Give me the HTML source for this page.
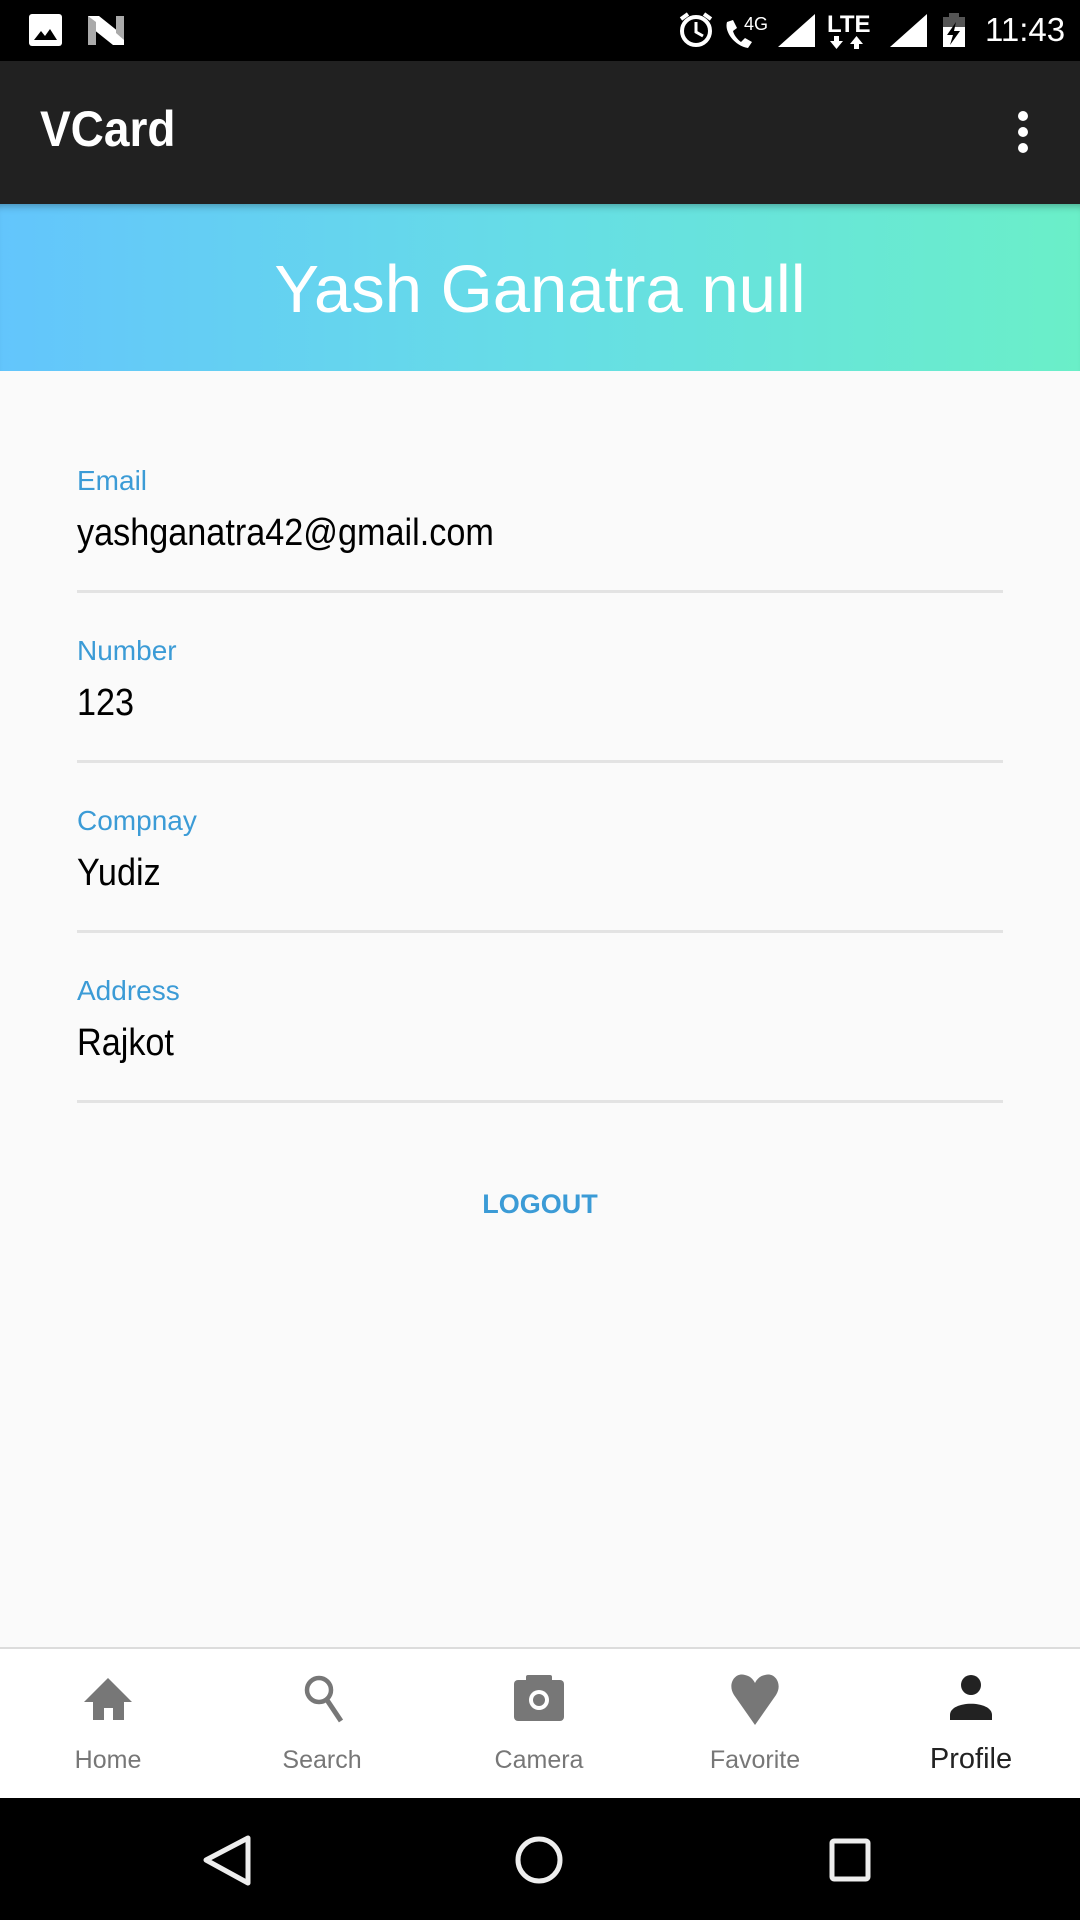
<!DOCTYPE html>
<html><head><meta charset="utf-8"><style>
*{margin:0;padding:0;box-sizing:border-box}
body{width:1080px;height:1920px;background:#fafafa;font-family:"Liberation Sans",sans-serif;position:relative;overflow:hidden}
.abs{position:absolute}
.sb{left:0;top:0;width:1080px;height:61px;background:#000}
.ab{left:0;top:61px;width:1080px;height:143px;background:#212121}
.hd{left:0;top:204px;width:1080px;height:167px;background:linear-gradient(90deg,#63c5fc,#66dde6 50%,#6aefc8);box-shadow:inset 0 8px 8px -6px rgba(0,0,0,.3)}
.lbl{left:77px;color:#3b9bd6;font-size:28px;line-height:1}
.val{left:77px;color:#000;font-size:38px;line-height:1;transform:scaleX(.9);transform-origin:left;white-space:nowrap}
.div{left:77px;width:926px;height:3px;background:#e3e3e3}
.nav{left:0;top:1647px;width:1080px;height:151px;background:#fff;border-top:2px solid #dcdcdc}
.ni{width:200px;text-align:center;font-size:25px;color:#777;line-height:1}
.nb{left:0;top:1798px;width:1080px;height:122px;background:#000}
</style></head><body>
<div class="abs sb"></div>
<svg class="abs" style="left:0;top:0" width="1080" height="61">
<rect x="29" y="14" width="33" height="32" rx="3" fill="#fff"/>
<path d="M34 40 L41 31 L45 36 L50 29 L57 40 Z" fill="#000"/>
<path d="M88 16 L99 16 L124 36 L124 45 L113 45 L88 25Z" fill="#fff"/>
<path d="M88 16 L96 22 L96 45 L88 45Z" fill="#aaa"/>
<path d="M116 16 L124 16 L124 40 L116 33Z" fill="#aaa"/>
<circle cx="696" cy="31" r="14" fill="none" stroke="#fff" stroke-width="4"/>
<path d="M696 22 V32 L703 36" stroke="#fff" stroke-width="3" fill="none"/>
<path d="M681 19 L688 14 M711 19 L704 14" stroke="#fff" stroke-width="4"/>
<path d="M727 22 C724 32 735 46 748 48 L752 42 L745 38 L741 42 C737 39 734 35 733 31 L737 28 L733 20Z" fill="#fff"/>
<text x="744" y="30" fill="#fff" font-size="18">4G</text>
<path d="M778 47 L815 14 L815 47Z" fill="#fff"/>
<text x="827" y="32" fill="#fff" font-size="24" font-weight="bold">LTE</text>
<path d="M834 36 h5v5h4l-6.5 8l-6.5-8h4z M854 49 h5v-5h4l-6.5-8l-6.5 8h4z" fill="#fff"/>
<path d="M890 47 L927 14 L927 47Z" fill="#fff"/>
<rect x="943" y="17" width="22" height="30" fill="#fff"/>
<rect x="943" y="17" width="22" height="10" fill="#555"/><rect x="949" y="13" width="10" height="4" fill="#555"/>
<path d="M956 22 L947 35 L953 35 L950 45 L960 31 L954 31Z" fill="#000"/>
<text x="985" y="41" fill="#fff" font-size="33">11:43</text>
</svg>
<div class="abs ab"></div>
<div class="abs" style="left:40px;top:104px;color:#fff;font-size:50px;font-weight:bold;line-height:1;transform:scaleX(.92);transform-origin:left">VCard</div>
<svg class="abs" style="left:1010px;top:110px" width="30" height="46"><circle cx="13" cy="6" r="5" fill="#fff"/><circle cx="13" cy="22" r="5" fill="#fff"/><circle cx="13" cy="38" r="5" fill="#fff"/></svg>
<div class="abs hd"></div>
<div class="abs" style="left:0;top:256px;width:1080px;text-align:center;color:#fff;font-size:67px;line-height:1">Yash Ganatra null</div>

<div class="abs lbl" style="top:467px">Email</div>
<div class="abs val" style="top:514px">yashganatra42@gmail.com</div>
<div class="abs div" style="top:590px"></div>
<div class="abs lbl" style="top:637px">Number</div>
<div class="abs val" style="top:684px">123</div>
<div class="abs div" style="top:760px"></div>
<div class="abs lbl" style="top:807px">Compnay</div>
<div class="abs val" style="top:854px">Yudiz</div>
<div class="abs div" style="top:930px"></div>
<div class="abs lbl" style="top:977px">Address</div>
<div class="abs val" style="top:1024px">Rajkot</div>
<div class="abs div" style="top:1100px"></div>
<div class="abs" style="left:0;top:1191px;width:1080px;text-align:center;color:#3b9bd6;font-size:27px;font-weight:bold;line-height:1">LOGOUT</div>

<div class="abs nav"></div>
<svg class="abs" style="left:0;top:1670px" width="1080" height="70">
<path d="M108 8 L132 32 L124 32 L124 50 L113 50 L113 38 L104 38 L104 50 L93 50 L93 32 L84 32Z" fill="#777"/>
<circle cx="319" cy="20" r="12" fill="none" stroke="#777" stroke-width="4.5"/>
<path d="M327 30 L341 51" stroke="#777" stroke-width="5"/>
<rect x="514" y="10" width="50" height="41" rx="4" fill="#777"/><rect x="526" y="5" width="26" height="8" rx="2" fill="#777"/>
<circle cx="539" cy="30" r="10" fill="#fff"/><circle cx="539" cy="30" r="6" fill="#777"/>
<path d="M755 55 L734 25 C727 14 735 2 745 5 C750 6 753 9 755 13 C757 9 760 6 765 5 C775 2 783 14 776 25Z" fill="#777"/>
<circle cx="971" cy="15" r="10" fill="#222"/>
<path d="M950 45 C950 30 992 30 992 45 V50 H950Z" fill="#222"/>
</svg>
<div class="abs ni" style="left:8px;top:1748px">Home</div>
<div class="abs ni" style="left:222px;top:1748px">Search</div>
<div class="abs ni" style="left:439px;top:1748px">Camera</div>
<div class="abs ni" style="left:655px;top:1748px">Favorite</div>
<div class="abs ni" style="left:871px;top:1745px;font-size:29px;color:#222">Profile</div>

<div class="abs nb"></div>
<svg class="abs" style="left:0;top:1798px" width="1080" height="122">
<path d="M248 40 L206 62 L248 85Z" fill="none" stroke="#eee" stroke-width="5" stroke-linejoin="round"/>
<circle cx="539" cy="62" r="21" fill="none" stroke="#eee" stroke-width="5"/>
<rect x="832" y="43" width="36" height="38" rx="2" fill="none" stroke="#eee" stroke-width="5"/>
</svg>
</body></html>
